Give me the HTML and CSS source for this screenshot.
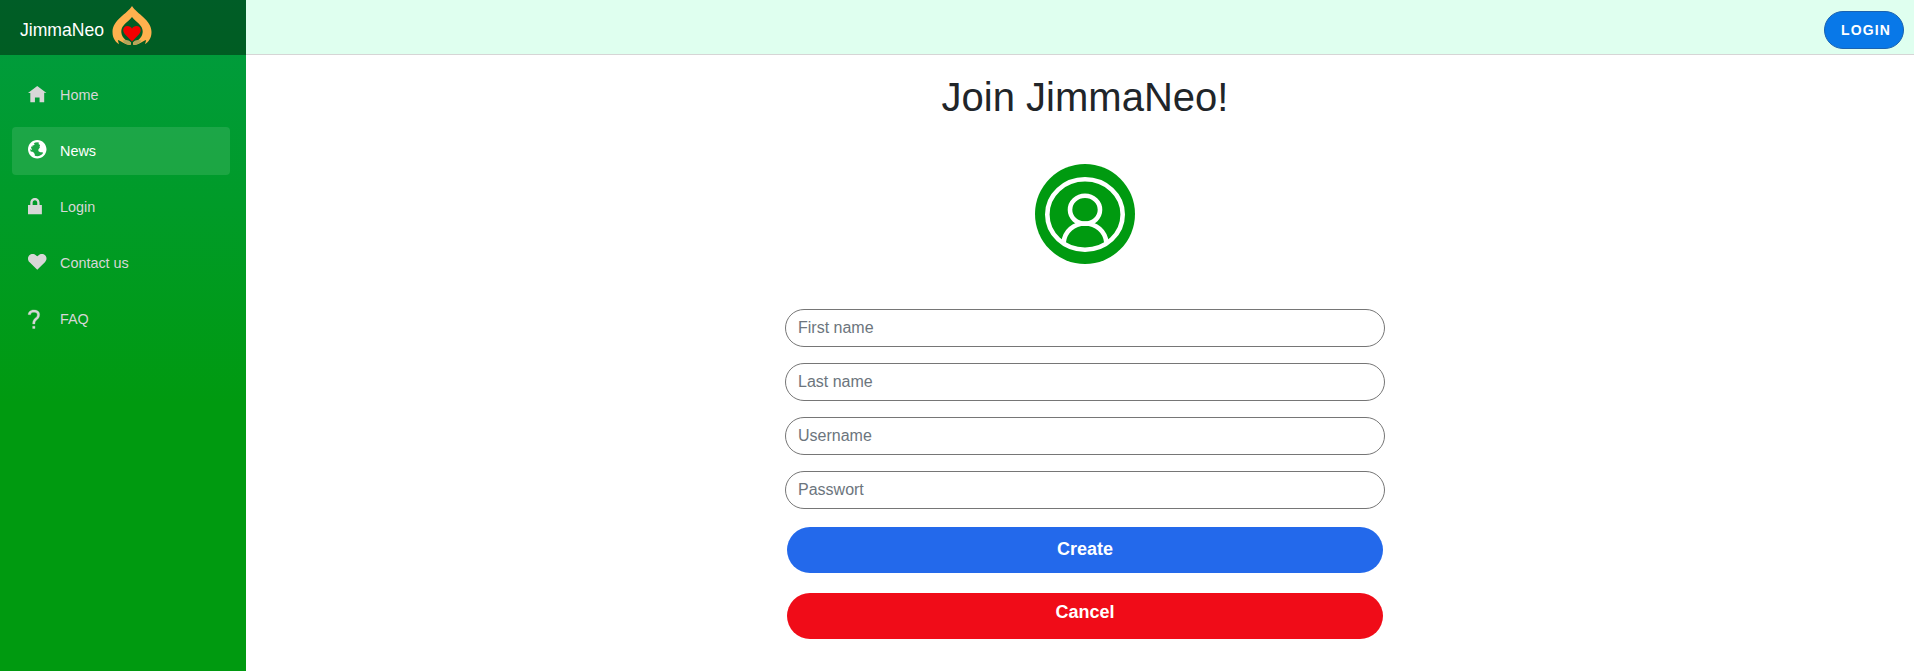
FILE: index.html
```html
<!DOCTYPE html>
<html lang="en">
<head>
<meta charset="utf-8">
<title>JimmaNeo</title>
<link rel="stylesheet" href="styles.css">
</head>
<body>
<div class="page">
  <aside class="sidebar">
    <div class="brand">
      <span class="brand-name">JimmaNeo</span>
      <svg class="brand-logo" viewBox="0 0 40 40">
        <path fill="#ffb14e" fill-rule="evenodd" d="M20 0C15 8 0.500 14 0.500 26C0.500 32 3.500 36 7 38.200L5.800 34C10 35 12 38.500 18.300 39C19.500 38 19 36.500 18.500 36C13 35 9 30 9.300 25C9.600 19 15.500 16.500 20 11C24.500 16.500 30.400 19 30.700 25C31 30 27 35 21.500 36C21 36.500 20.500 38 21.700 39C28 38.500 30 35 34.200 34L33 38.200C36.500 36 39.500 32 39.500 26C39.500 14 25 8 20 0Z"/>
        <path fill="#b3a55b" d="M10.500 34.500C14 33.300 17 34 18.800 36.200V38.800C15 39 12 37.500 10.500 34.500ZM29.500 34.500C26 33.300 23 34 21.200 36.200V38.800C25 39 28 37.500 29.500 34.500Z"/>
        <path fill="#f40000" d="M20 35.500L13.200 28.500C9.500 24.500 11.500 20 15.300 20C17.500 20 19.200 21 20 22.800C20.800 21 22.500 20 24.700 20C28.500 20 30.500 24.500 26.800 28.500Z"/>
      </svg>
    </div>
    <nav class="nav">
      <a class="nav-link"><svg class="icon" viewBox="0 0 8 8"><path d="M4 0l-4 3h1v4h2v-2h2v2h2v-4.030l1 .030-4-3z"/></svg>Home</a>
      <a class="nav-link active"><svg class="icon globe" viewBox="0 0 8 8"><path d="M4 0c-2.200 0-4 1.800-4 4s1.800 4 4 4 4-1.800 4-4-1.800-4-4-4zm0 1c.33 0 .64.09.94.19-.21.2-.45.38-.41.56.04.18.69.13.69.5 0 .27-.42.35-.13.66.35.35-.64.98-.66 1.440-.03.83.84.97 1.530.97.42 0 .53.2.5.44-.54.77-1.460 1.250-2.470 1.250-.38 0-.73-.09-1.060-.22.22-.44-.28-1.310-.75-1.590-.23-.23-.72-.14-1-.25-.09-.27-.18-.54-.19-.84.03-.05.08-.09.16-.09.19 0 .45.38.59.34.18-.04-.74-1.310-.31-1.560.2-.12.6.39.47-.16-.12-.51.36-.28.66-.41.26-.11.45-.41.13-.59-.06-.03-.13-.1-.22-.19.45-.27.97-.44 1.530-.44z"/></svg>News</a>
      <a class="nav-link"><svg class="icon" viewBox="0 0 8 8"><path d="M3 0c-1.100 0-2 .9-2 2v1h-1v4h6v-4h-1v-1c0-1.100-.9-2-2-2zm0 1c.56 0 1 .44 1 1v1h-2v-1c0-.56.44-1 1-1z"/></svg>Login</a>
      <a class="nav-link"><svg class="icon" viewBox="0 0 8 8"><path d="M2 0c-.55 0-1.040.23-1.410.59-.36.36-.59.85-.59 1.410 0 .55.23 1.100.59 1.410l3.410 3.410 3.410-3.410c.36-.36.59-.85.59-1.410 0-.55-.23-1.040-.59-1.410-.36-.36-.85-.59-1.410-.59-.55 0-1.040.23-1.410.59-.36.36-.59.41-.59.41s-.23-.05-.59-.41c-.36-.36-.85-.59-1.410-.59z"/></svg>Contact us</a>
      <a class="nav-link"><svg class="icon question" viewBox="0.500 0 8 8"><path d="M2.470 0c-.85 0-1.480.26-1.880.66-.4.4-.54.9-.59 1.280l1 .13c.04-.25.12-.5.31-.69.19-.19.49-.38 1.160-.38.66 0 1.020.16 1.220.34.2.18.28.4.28.66 0 .83-.34 1.060-.84 1.500-.5.44-1.160 1.080-1.160 2.250v.25h1v-.25c0-.83.31-1.060.81-1.500.5-.44 1.190-1.080 1.190-2.250 0-.48-.17-1.020-.59-1.410-.43-.39-1.070-.59-1.910-.59zm-.5 7v1h1v-1h-1z" transform="translate(.55 0)"/></svg>FAQ</a>
    </nav>
  </aside>
  <main class="main">
    <header class="topbar"><button class="login">LOGIN</button></header>
    <section class="content">
      <h1 class="title">Join JimmaNeo!</h1>
      <svg class="avatar" viewBox="0 0 100 100">
        <circle cx="50" cy="50" r="50" fill="#009a10"/>
        <g fill="none" stroke="#fff" stroke-width="4.600">
          <ellipse cx="50" cy="50.500" rx="37.700" ry="35.200"/>
          <ellipse cx="50" cy="45.800" rx="15" ry="14"/>
          <path d="M28.500 79C29.500 67 39 59.500 50 59.500S70.500 67 71.500 79"/>
        </g>
      </svg>
      <form class="form">
        <input class="field" placeholder="First name">
        <input class="field" placeholder="Last name">
        <input class="field" placeholder="Username">
        <input class="field" placeholder="Passwort">
        <button type="button" class="btn create">Create</button>
        <button type="button" class="btn cancel">Cancel</button>
      </form>
    </section>
  </main>
</div>
</body>
</html>
```

FILE: styles.css
```css
* { box-sizing: border-box; }
body { margin: 0; background: #fff; color: #212529; font: 16px/24px "Liberation Sans", Arial, sans-serif; }
.page { display: flex; height: 671px; overflow: hidden; }
.sidebar { width: 246px; flex: none; background: linear-gradient(180deg, #009c41 0%, #009a10 60%); }
.brand { display: flex; align-items: flex-start; height: 55px; padding: 6px 0 0 20px; background: rgba(0, 0, 0, .4); color: #fff; }
.brand-name { font-size: 17.6px; line-height: 26px; margin-top: 11px; width: 92px; }
.brand-logo { width: 40px; height: 40px; }
.nav { display: flex; flex-direction: column; gap: 8px; padding: 16px 16px 0 12px; }
.nav-link { display: flex; align-items: center; height: 48px; padding: 0 16px; border-radius: 4px; color: #d7d7d7; font-size: 14.4px; }
.nav-link.active { background: rgba(255, 255, 255, .11); color: #fff; }
.icon { width: 18.500px; height: 18.500px; margin: 1px 13.500px 0 0; fill: currentColor; overflow: visible; }
.icon.globe { margin-top: -4px; }
.icon.question { margin-top: 0; stroke: currentColor; stroke-width: .15; }
.main { flex: 1; }
.topbar { display: flex; justify-content: flex-end; height: 55px; padding: 11px 10px 0 0; background: #dfffef; border-bottom: 1px solid #d6d5d5; }
.login { width: 80px; height: 38px; padding: 0 0 0 4px; border: 1px solid #1a62b0; border-radius: 19px; background: #0878e8; color: #fff; font: bold 14px/20px "Liberation Sans", Arial, sans-serif; letter-spacing: 1.100px; }
.content { display: flex; flex-direction: column; align-items: center; padding: 18px 0 0 10px; }
.title { margin: 0; font-size: 40px; font-weight: 400; line-height: 48px; }
.avatar { width: 100px; height: 100px; margin-top: 43px; }
.form { display: flex; flex-direction: column; align-items: center; gap: 16px; width: 600px; margin-top: 45px; }
.field { width: 600px; height: 38px; padding: 0 12px; border: 1px solid #767676; border-radius: 19px; background: #fff; font: 16px/24px "Liberation Sans", Arial, sans-serif; }
.field::placeholder { color: #6c757d; opacity: 1; }
.btn { width: 596px; height: 46px; border: 0; border-radius: 23px; color: #fff; font: bold 18px/24px "Liberation Sans", Arial, sans-serif; }
.create { margin-top: 2px; padding: 0 0 2px; background: #2369eb; }
.cancel { margin-top: 4px; padding: 0 0 8px; background: #f00c18; }
```
